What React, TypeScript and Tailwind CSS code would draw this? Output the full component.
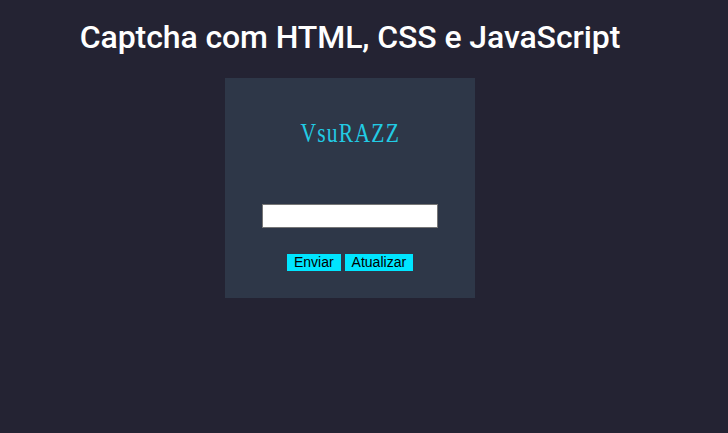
export default function App() {
  return (
    <div className="min-h-[433px] w-full bg-[#242333]">
      <div className="flex w-[700px] flex-col items-center pt-[18px]">
        <h1 className="text-[32px] font-medium leading-[38px] tracking-[-0.1px] text-white [font-family:Roboto,sans-serif]">
          Captcha com HTML, CSS e JavaScript
        </h1>
        <div className="mt-[22px] flex h-[220px] w-[250px] flex-col items-center bg-[#2e3748]">
          <div className="mt-[39px] h-[32px] text-[27px] leading-[32px] tracking-[1.5px] text-[#22cbe4] scale-x-[0.8] [font-family:'Liberation_Serif',serif]">
            VsuRAZZ
          </div>
          <input
            type="text"
            className="mt-[55px] h-[24px] w-[176px] border border-[#767676] bg-white outline-none"
          />
          <div className="mt-[26px] flex gap-[4px] [font-family:'Liberation_Sans',Arial,sans-serif]">
            <button className="h-[17px] bg-[#00e5ff] px-[7px] text-[14px] leading-[17px] text-black">Enviar</button>
            <button className="h-[17px] bg-[#00e5ff] px-[7px] text-[14px] leading-[17px] text-black">Atualizar</button>
          </div>
        </div>
      </div>
    </div>
  );
}
